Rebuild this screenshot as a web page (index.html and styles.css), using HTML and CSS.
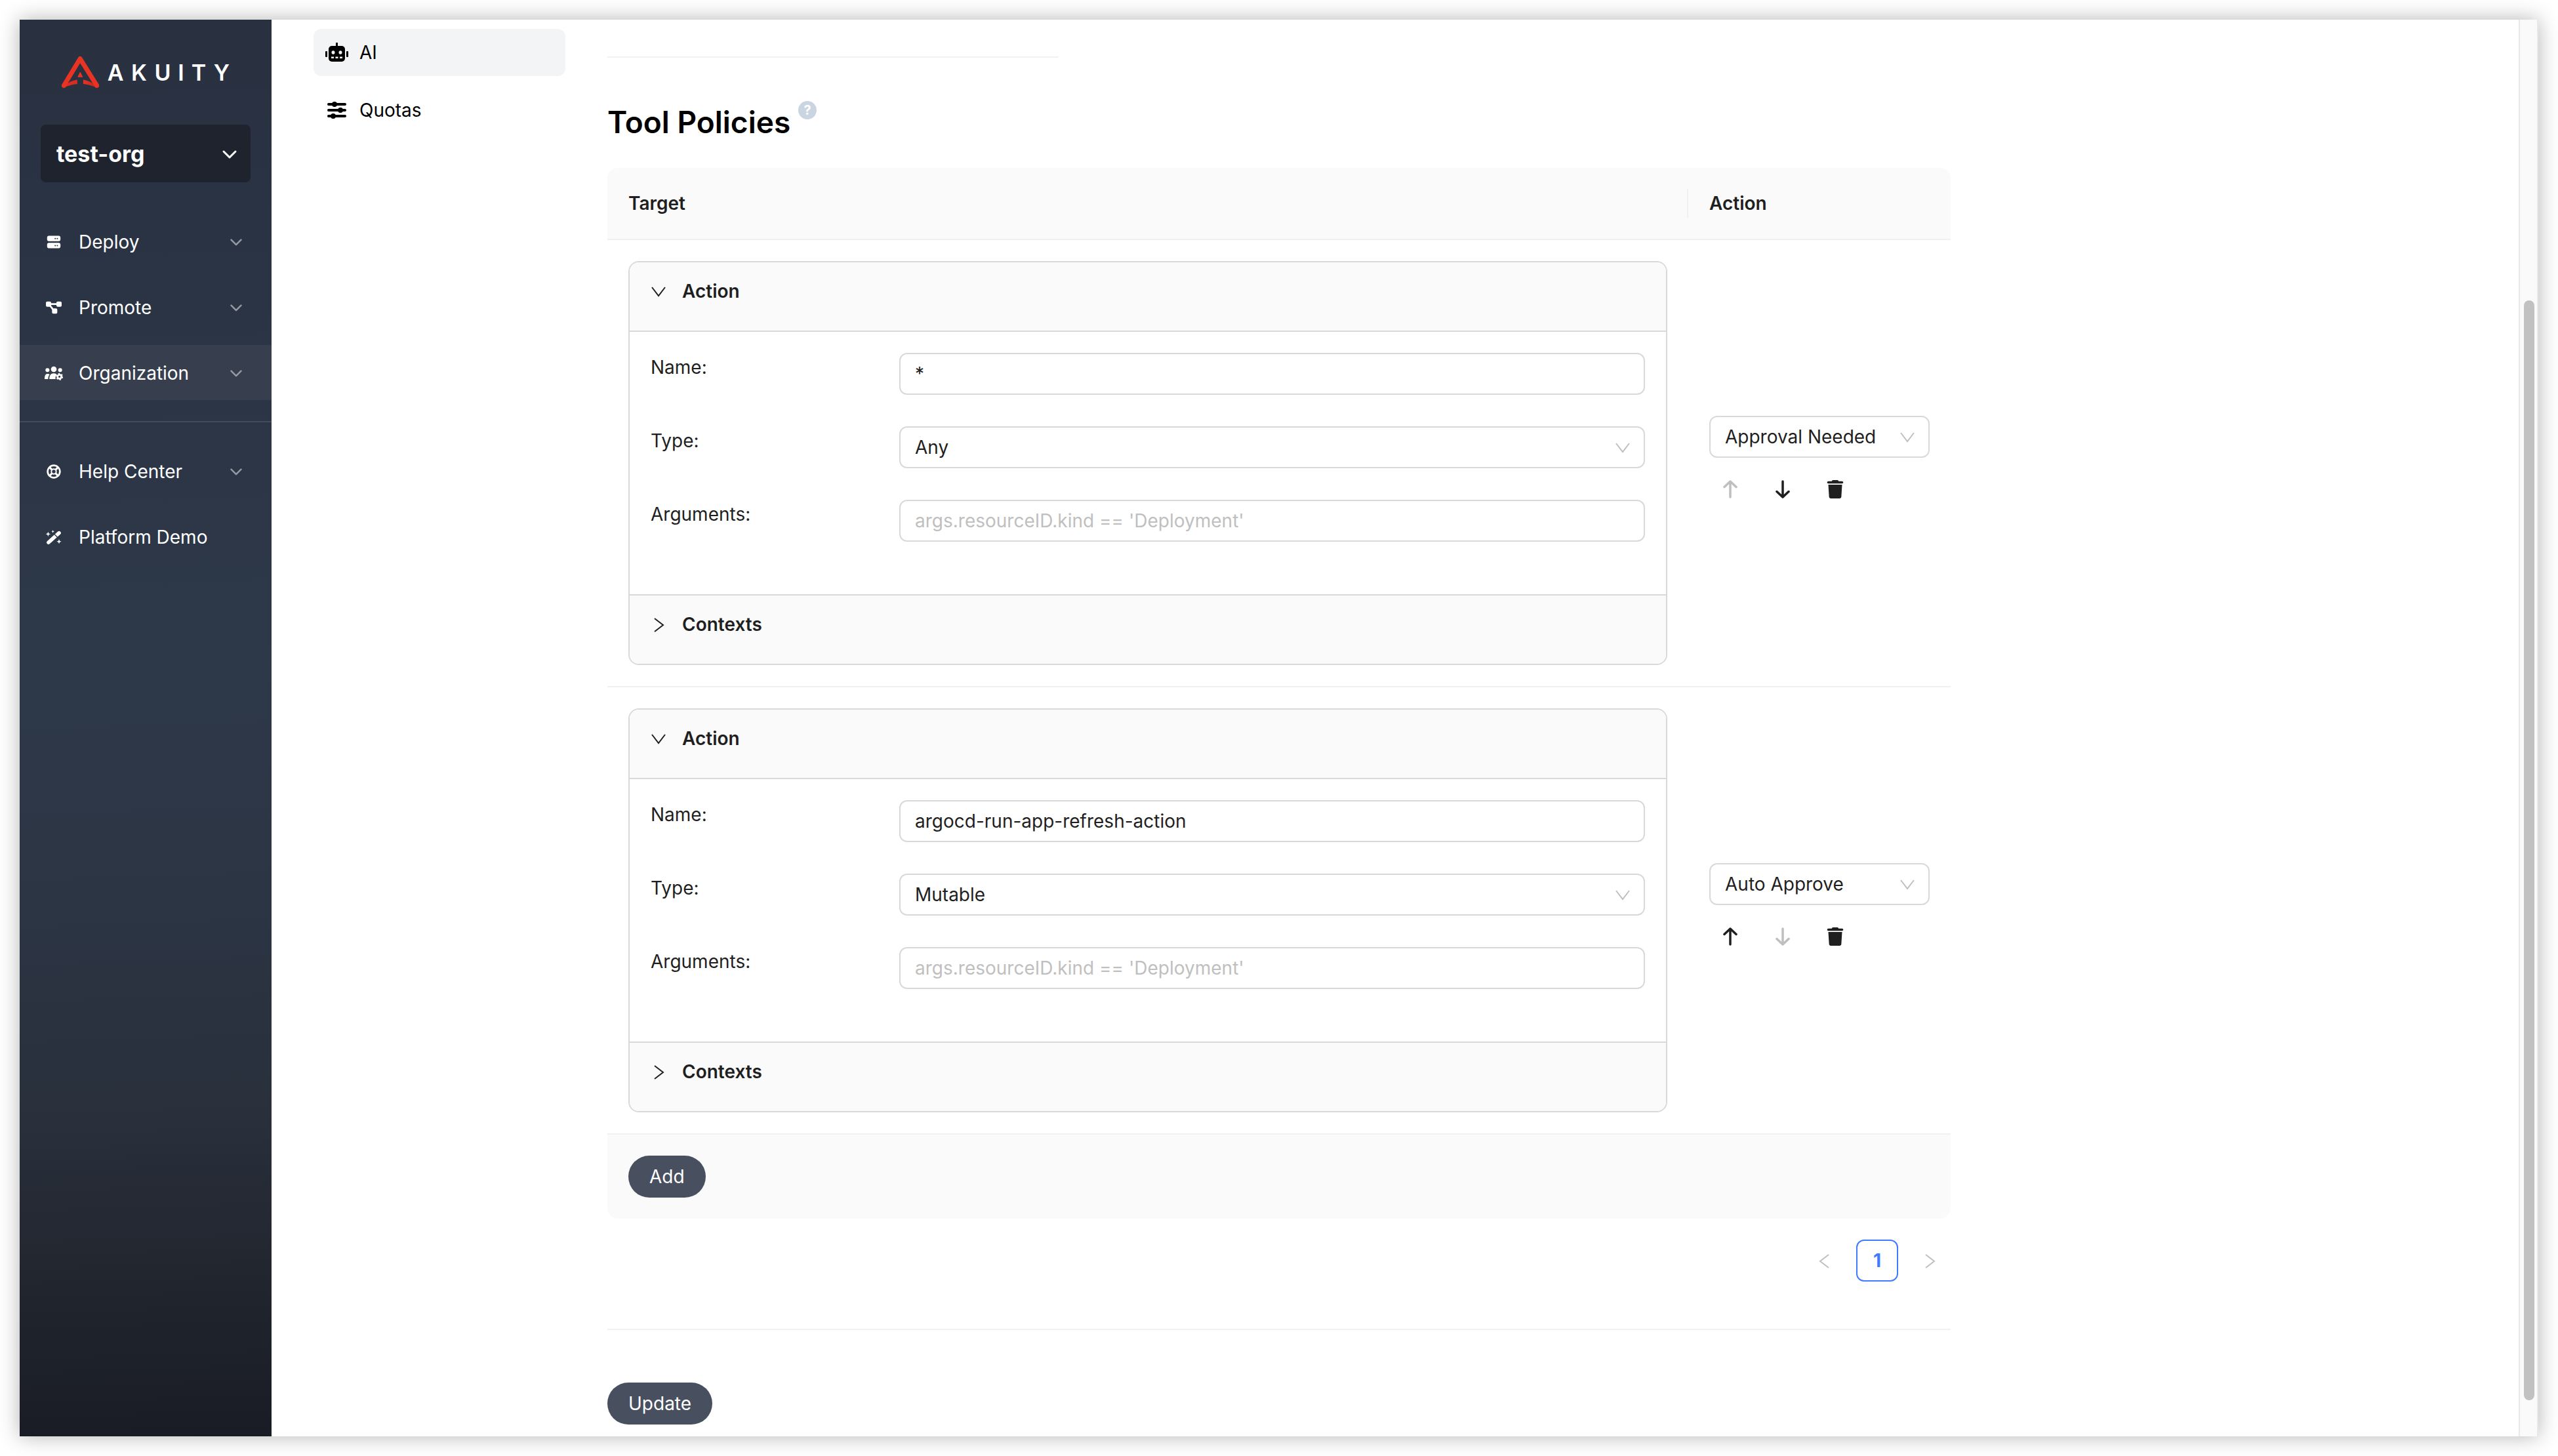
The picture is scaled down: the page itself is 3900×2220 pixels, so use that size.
FILE: index.html
```html
<!DOCTYPE html>
<html lang="en">
<head>
<meta charset="utf-8">
<title>Organization settings – AI</title>
<meta name="viewport" content="width=device-width, initial-scale=1">
<link rel="stylesheet" href="styles.css">
</head>
<body>
<svg class="sprite" aria-hidden="true">
  <symbol id="chevron" viewBox="0 0 24 24"><path d="M3 8l9 9 9-9" fill="none" stroke="currentColor" stroke-width="3" stroke-linecap="round" stroke-linejoin="round"/></symbol>
  <symbol id="angle-down" viewBox="0 0 24 24"><path d="M2 6l10 13L22 6" fill="none" stroke="currentColor" stroke-width="2"/></symbol>
  <symbol id="angle-right" viewBox="0 0 24 24"><path d="M6 3l13 10L6 23" fill="none" stroke="currentColor" stroke-width="2"/></symbol>
  <symbol id="angle-left" viewBox="0 0 24 24"><path d="M18 3L5 13l13 10" fill="none" stroke="currentColor" stroke-width="2"/></symbol>
  <symbol id="arrow-up" viewBox="0 0 28 28"><path d="M14 26V2M5 10.500l9-8.500 9 8.500" fill="none" stroke="currentColor" stroke-width="3.500" stroke-linecap="round" stroke-linejoin="round"/></symbol>
  <symbol id="arrow-down" viewBox="0 0 28 28"><path d="M14 2v24M5 17.500l9 8.500 9-8.500" fill="none" stroke="currentColor" stroke-width="3.500" stroke-linecap="round" stroke-linejoin="round"/></symbol>
  <symbol id="trash" viewBox="0 0 448 512"><path fill="currentColor" d="M135.200 17.700L128 32H32C14.300 32 0 46.300 0 64S14.300 96 32 96H416c17.700 0 32-14.300 32-32s-14.300-32-32-32H320l-7.200-14.300C307.400 6.800 296.300 0 284.200 0H163.800c-12.100 0-23.200 6.800-28.600 17.700zM416 128H32L53.200 467c1.600 25.300 22.600 45 47.900 45H346.900c25.300 0 46.300-19.700 47.900-45L416 128z"/></symbol>
</svg>
<div class="window">
  <aside class="sidebar">
    <div class="logo">
      <svg class="logo-mark" viewBox="0 0 170 146" aria-hidden="true">
        <defs><linearGradient id="fold" x1="0" x2="1"><stop offset="0" stop-color="#e93323"/><stop offset="1" stop-color="#b8271f"/></linearGradient></defs>
        <path d="M14 134Q38 112 71 107V127Q38 130 12 144Z" fill="#d92d21"/>
        <path d="M156 134Q130 112 98 107V127Q130 130 157 144Z" fill="url(#fold)"/>
        <path d="M10 134L84 12l76 122" fill="none" stroke="#e93323" stroke-width="21" stroke-linecap="round" stroke-linejoin="round"/>
        <path d="M84 75l10 19H75z" fill="#e93323" stroke="#e93323" stroke-width="4" stroke-linejoin="round"/>
      </svg>
      <svg class="logo-word" viewBox="0 0 200 50"><text x="18 54 90 118 145 180" y="38" text-anchor="middle">AKUITY</text></svg>
    </div>
    <button class="org-switch" type="button">test-org<svg class="icon-24"><use href="#chevron"/></svg></button>
    <nav class="nav">
      <a href="#deploy"><svg class="nav-icon" viewBox="-96 0 704 512"><path fill="currentColor" fill-rule="evenodd" d="M64 16C28.700 16 0 44.700 0 80v80c0 35.300 28.700 64 64 64H448c35.300 0 64-28.700 64-64V80c0-35.300-28.700-64-64-64H64zm248 82a26 26 0 1 1 0 52 26 26 0 1 1 0-52zm80 0a26 26 0 1 1 0 52 26 26 0 1 1 0-52zM64 288c-35.300 0-64 28.700-64 64v80c0 35.300 28.700 64 64 64H448c35.300 0 64-28.700 64-64V352c0-35.300-28.700-64-64-64H64zm248 78a26 26 0 1 1 0 52 26 26 0 1 1 0-52zm80 0a26 26 0 1 1 0 52 26 26 0 1 1 0-52z"/></svg><span>Deploy</span><svg class="caret"><use href="#chevron"/></svg></a>
      <a href="#promote"><svg class="nav-icon" viewBox="-48 0 672 512"><path fill="currentColor" d="M0 80C0 53.500 21.500 32 48 32h96c26.500 0 48 21.500 48 48V96H384V80c0-26.500 21.500-48 48-48h96c26.500 0 48 21.500 48 48v96c0 26.500-21.500 48-48 48H432c-26.500 0-48-21.500-48-48V160H192v16c0 1.700-.1 3.400-.3 5L272 288h96c26.500 0 48 21.500 48 48v96c0 26.500-21.500 48-48 48H272c-26.500 0-48-21.500-48-48V336c0-1.700 .1-3.400 .3-5L144 224H48c-26.500 0-48-21.500-48-48V80z"/></svg><span>Promote</span><svg class="caret"><use href="#chevron"/></svg></a>
      <a href="#organization" class="active"><svg class="nav-icon" viewBox="0 0 84 66"><g fill="currentColor"><circle cx="42" cy="15" r="13"/><circle cx="13" cy="19" r="9"/><circle cx="71" cy="19" r="9"/><path d="M0 60c0-16 4-24 14-24 4 0 7 1 9 3-5 6-7 12-7 21zM22 60c0-17 6-26 20-26 7 0 12 2 14 6-5 4-7 9-6 20z"/></g><circle cx="68" cy="49" r="9" fill="none" stroke="currentColor" stroke-width="8"/><circle cx="68" cy="49" r="14" fill="none" stroke="currentColor" stroke-width="5" stroke-dasharray="7 7.660"/></svg><span>Organization</span><svg class="caret"><use href="#chevron"/></svg></a>
      <hr>
      <a href="#help"><svg class="nav-icon" viewBox="-6 0 84 64"><g fill="none" stroke="currentColor"><circle cx="36" cy="32" r="28" stroke-width="8"/><circle cx="36" cy="32" r="11" stroke-width="6"/><path d="M17 13l11 11M55 13L44 24M17 51l11-11M55 51L44 40" stroke-width="9"/></g></svg><span>Help Center</span><svg class="caret"><use href="#chevron"/></svg></a>
      <a href="#demo"><svg class="nav-icon" viewBox="0 0 84 66"><g fill="currentColor"><path d="M18 57L66 14" stroke="currentColor" stroke-width="17" stroke-linecap="round"/><path d="M16 8l3 8 8 3-8 3-3 8-3-8-8-3 8-3zM38 0l2 5 5 2-5 2-2 5-2-5-5-2 5-2zM66 42l3 8 8 3-8 3-3 8-3-8-8-3 8-3z"/><path d="M44 19l17 17" stroke="#2c3646" stroke-width="4"/></g></svg><span>Platform Demo</span></a>
    </nav>
  </aside>

  <main class="main">
    <nav class="subnav">
      <a href="#ai" class="active"><svg class="sub-icon" viewBox="0 0 36 30"><g fill="currentColor"><path d="M16 0h3v6h-3z"/><rect x="5" y="5" width="25" height="24" rx="5"/><rect x="0" y="13" width="3" height="9" rx="1"/><rect x="32" y="13" width="3" height="9" rx="1"/></g><g fill="#f3f4f6"><ellipse cx="12" cy="15" rx="2.500" ry="2.800"/><ellipse cx="23" cy="15" rx="2.500" ry="2.800"/><path d="M9 21.500h4v2.500H9zM15.500 21.500h4v2.500h-4zM22 21.500h4v2.500h-4z"/></g></svg>AI</a>
      <a href="#quotas"><svg class="sub-icon" viewBox="0 0 36 30"><path d="M5 6h25M5 15h25M5 24h25" stroke="currentColor" stroke-width="4" stroke-linecap="round"/><g fill="currentColor"><circle cx="14" cy="6" r="4"/><circle cx="23" cy="15" r="4"/><circle cx="12" cy="24" r="4"/></g></svg>Quotas</a>
    </nav>

    <section class="content">
      <hr class="rule short">
      <h1>Tool Policies <button class="hint" type="button" aria-label="About tool policies">?</button></h1>
      <table class="policies">
        <thead><tr><th class="target"><span>Target</span></th><th class="act">Action</th></tr></thead>
        <tbody>
          <tr>
            <td>
              <div class="panel">
                <button class="panel-head" type="button"><svg class="icon-24"><use href="#angle-down"/></svg>Action</button>
                <div class="panel-body">
                  <div class="field"><label for="name1">Name:</label><input id="name1" type="text" value="*"></div>
                  <div class="field"><label for="type1">Type:</label><div class="select"><select id="type1"><option>Any</option><option>Mutable</option></select><svg class="icon-24"><use href="#angle-down"/></svg></div></div>
                  <div class="field"><label for="args1">Arguments:</label><input id="args1" type="text" placeholder="args.resourceID.kind == 'Deployment'"></div>
                </div>
                <button class="panel-head" type="button"><svg class="icon-24"><use href="#angle-right"/></svg>Contexts</button>
              </div>
            </td>
            <td>
              <div class="select"><select aria-label="Action"><option>Approval Needed</option><option>Auto Approve</option></select><svg class="icon-24"><use href="#angle-down"/></svg></div>
              <div class="tools">
                <button type="button" aria-label="Move up" disabled><svg><use href="#arrow-up"/></svg></button>
                <button type="button" aria-label="Move down"><svg><use href="#arrow-down"/></svg></button>
                <button type="button" aria-label="Delete"><svg><use href="#trash"/></svg></button>
              </div>
            </td>
          </tr>
          <tr>
            <td>
              <div class="panel">
                <button class="panel-head" type="button"><svg class="icon-24"><use href="#angle-down"/></svg>Action</button>
                <div class="panel-body">
                  <div class="field"><label for="name2">Name:</label><input id="name2" type="text" value="argocd-run-app-refresh-action"></div>
                  <div class="field"><label for="type2">Type:</label><div class="select"><select id="type2"><option>Mutable</option><option>Any</option></select><svg class="icon-24"><use href="#angle-down"/></svg></div></div>
                  <div class="field"><label for="args2">Arguments:</label><input id="args2" type="text" placeholder="args.resourceID.kind == 'Deployment'"></div>
                </div>
                <button class="panel-head" type="button"><svg class="icon-24"><use href="#angle-right"/></svg>Contexts</button>
              </div>
            </td>
            <td>
              <div class="select"><select aria-label="Action"><option>Auto Approve</option><option>Approval Needed</option></select><svg class="icon-24"><use href="#angle-down"/></svg></div>
              <div class="tools">
                <button type="button" aria-label="Move up"><svg><use href="#arrow-up"/></svg></button>
                <button type="button" aria-label="Move down" disabled><svg><use href="#arrow-down"/></svg></button>
                <button type="button" aria-label="Delete"><svg><use href="#trash"/></svg></button>
              </div>
            </td>
          </tr>
        </tbody>
      </table>
      <div class="table-foot"><button class="primary" type="button">Add</button></div>
      <div class="pager">
        <button type="button" aria-label="Previous page" disabled><svg><use href="#angle-left"/></svg></button>
        <button type="button" class="current">1</button>
        <button type="button" aria-label="Next page" disabled><svg><use href="#angle-right"/></svg></button>
      </div>
      <hr class="rule">
      <button class="primary update" type="button">Update</button>
    </section>
  </main>
  <div class="scroll-track" aria-hidden="true"><div class="scroll-thumb"></div></div>
</div>
</body>
</html>
```
FILE: styles.css
```css
* { box-sizing: border-box; }

body {
  margin: 0;
  padding: 30px;
  background: #fff;
  color: #1f1f1f;
  font: 28px/44px Inter, "Liberation Sans", sans-serif;
}

button, input, select { font: inherit; color: inherit; margin: 0; }
button { border: 0; background: none; padding: 0; cursor: pointer; }
button:disabled { cursor: default; }
a { color: inherit; text-decoration: none; }
svg { display: block; flex: none; }
.sprite { display: none; }
.icon-24 { width: 24px; height: 24px; }

.window {
  display: flex;
  min-height: calc(100vh - 60px);
  background: #fff;
  box-shadow: 0 0 30px rgba(0, 0, 0, .3);
}

/* Sidebar */
.sidebar {
  flex: 0 0 384px;
  color: #fff;
  background: linear-gradient(178deg, #293141 0%, #2d3848 46%, #2c3544 62%, #29303c 77%, #22262f 88%, #191c24 100%);
}
.logo { display: flex; align-items: center; gap: 7px; padding: 55px 0 55px 64px; }
.logo-mark { width: 57px; height: 50px; }
.logo-word { width: 200px; height: 50px; }
.logo-word text { font-size: 34px; font-weight: 600; fill: #fff; }
.org-switch {
  display: flex;
  align-items: center;
  justify-content: space-between;
  width: 320px;
  height: 88px;
  margin: 0 32px 48px;
  padding: 2px 20px 0 24px;
  border-radius: 8px;
  background: #1e232e;
  font-size: 34px;
  font-weight: 700;
}
.nav { display: flex; flex-direction: column; gap: 16px; }
.nav a { display: flex; align-items: center; height: 84px; padding: 2px 44px 0 38px; }
.nav a.active { background: #373f4f; }
.nav span { flex: 1; }
.nav-icon { width: 28px; height: 22px; margin-right: 24px; }
.caret { width: 20px; height: 20px; color: #9499a2; }
.nav hr { width: 100%; margin: 16px 0; border: 0; border-top: 2px solid #434c5c; }

/* Settings area */
.main { flex: 1; min-width: 0; display: flex; gap: 64px; padding: 14px 64px 18px; color: #000; }
.subnav { flex: 0 0 384px; display: flex; flex-direction: column; gap: 16px; }
.subnav a { display: flex; align-items: center; gap: 16px; height: 72px; padding: 0 18px; border-radius: 12px; }
.subnav a.active { background: #f3f4f6; }
.sub-icon { width: 36px; height: 30px; }
.content { flex: 1; min-width: 0; max-width: 2048px; color: #1f1f1f; }
.rule { margin: 0; border: 0; border-top: 2px solid #f2f2f2; }
.rule.short { width: 688px; margin-top: 42px; }
h1 { display: flex; gap: 12px; margin: 66px 0 38px; font-size: 46px; line-height: 64px; font-weight: 600; color: #000; }
.hint { width: 28px; height: 28px; border-radius: 50%; background: #cbd5e1; color: #fff; font-size: 20px; line-height: 28px; font-weight: 700; }

/* Policies table */
.policies { width: 100%; border-collapse: separate; border-spacing: 0; table-layout: fixed; }
th { height: 110px; padding: 0 32px; background: #fafafa; border-bottom: 2px solid #f0f0f0; text-align: left; font-weight: 600; }
th:first-child { border-top-left-radius: 16px; }
th:last-child { border-top-right-radius: 16px; }
.target { padding-right: 0; }
.target span { display: block; border-right: 2px solid #f0f0f0; }
.act { width: 400px; }
td { padding: 32px; border-bottom: 2px solid #f0f0f0; vertical-align: middle; }

.panel { border: 2px solid #d9d9d9; border-radius: 16px; overflow: hidden; }
.panel-head { display: flex; align-items: center; gap: 24px; width: 100%; height: 104px; padding: 0 32px 16px; background: #fafafa; font-weight: 600; }
.panel-body { border: solid #d9d9d9; border-width: 2px 0; padding: 32px; }
.field { display: grid; grid-template-columns: 25% 75%; align-items: start; margin-bottom: 48px; }
input, select {
  display: block;
  width: 100%;
  height: 64px;
  padding: 0 22px;
  border: 2px solid #d9d9d9;
  border-radius: 12px;
  background: #fff;
  appearance: none;
}
input::placeholder { color: #bfbfbf; opacity: 1; }
.select { display: grid; align-items: center; color: #1f1f1f; }
.select > * { grid-area: 1 / 1; }
.select svg { justify-self: end; margin-right: 22px; color: #bfbfbf; pointer-events: none; }
.tools { display: flex; gap: 16px; margin-top: 16px; }
.tools button, .pager button { display: grid; place-items: center; width: 64px; height: 64px; }
.tools svg { width: 28px; height: 28px; }
.tools button:disabled, .pager button:disabled { color: #bfbfbf; }

.table-foot { padding: 32px; background: #fafafa; border-radius: 0 0 16px 16px; }
.primary { display: block; height: 64px; padding: 0 32px; border-radius: 32px; background: #48505f; color: #fff; }
.pager { display: flex; justify-content: flex-end; gap: 16px; margin: 32px 0 72px; }
.pager svg { width: 24px; height: 24px; }
.pager .current { border: 2px solid #407bff; border-radius: 12px; color: #407bff; font-weight: 700; }
.update { margin-top: 80px; }

/* Scrollbar */
.scroll-track {
  flex: 0 0 30px;
  display: grid;
  grid-template-rows: 428fr 1677fr 55fr;
  padding: 0 4px 0 6px;
  border: solid #e8e8e8;
  border-width: 0 2px;
  background: #fafafa;
}
.scroll-thumb { grid-row: 2; border-radius: 8px; background: #c1c1c1; }
```
